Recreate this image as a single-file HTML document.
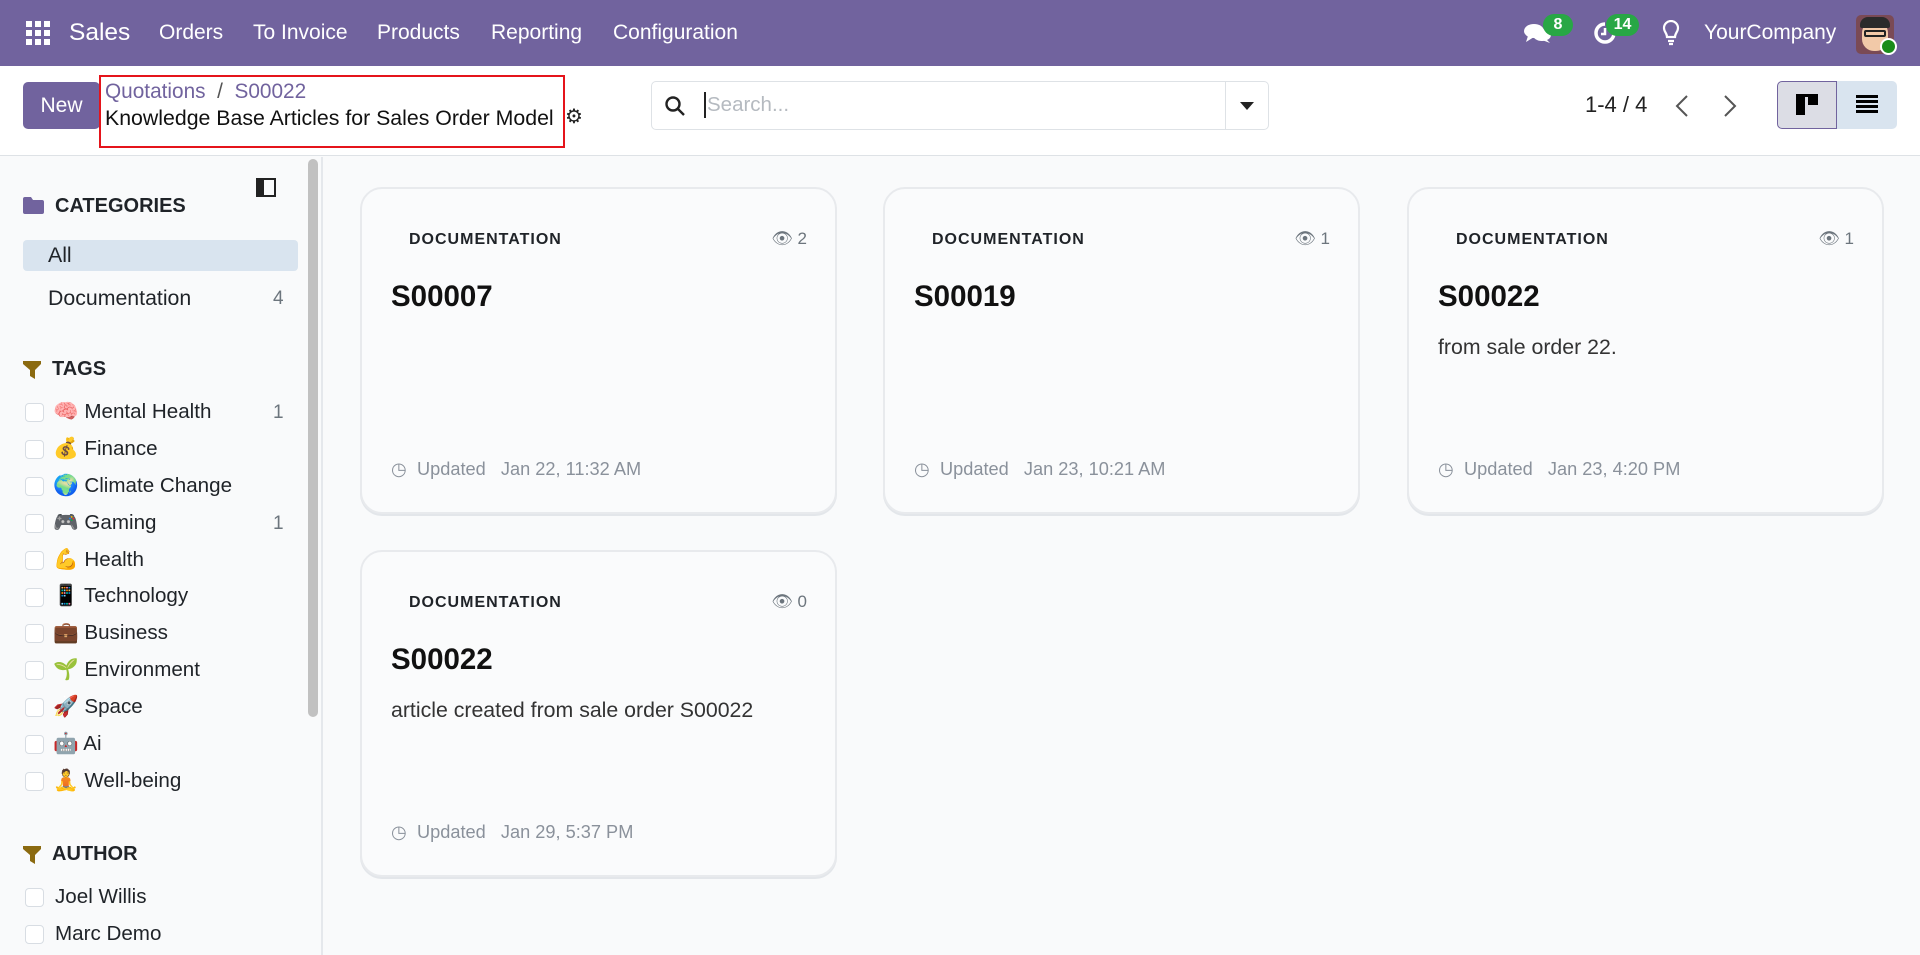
<!DOCTYPE html>
<html><head><meta charset="utf-8"><style>
*{box-sizing:border-box;margin:0;padding:0}
body{width:1920px;height:955px;overflow:hidden;background:#f9fafb;font-family:"Liberation Sans","Noto Sans CJK SC",sans-serif;color:#1f2328;position:relative}
.a{position:absolute;white-space:nowrap}
.nav{position:absolute;left:0;top:0;width:1920px;height:66px;background:#71639e;color:#fff}
.nav .a{font-size:21px;top:21px}
.cp{position:absolute;left:0;top:66px;width:1920px;height:90px;background:#fff;border-bottom:1px solid #dee2e6}
.side{position:absolute;left:0;top:157px;width:323px;height:798px;background:#f9fafb;border-right:2px solid #e5e8ec}
.cb{position:absolute;left:25px;width:19px;height:19px;border:1px solid #d8dde3;border-radius:4px;background:#fff}
.lbl{font-size:21.3px;color:#1f2328}
.tg{font-size:20.6px;color:#1f2328}
.cnt{font-size:19px;color:#6c757d}
.card{position:absolute;width:477px;height:327px;background:#fafbfc;border:2px solid #e8eaed;border-radius:22px;box-shadow:0 2px 0 #e3e6ea}
.card .cat{position:absolute;left:47px;top:42px;font-size:16px;font-weight:bold;letter-spacing:1px;color:#1f2328}
.card .views{position:absolute;right:28px;top:40px;font-size:17px;color:#6c757d}
.card .t{position:absolute;left:29px;top:91px;font-size:29.5px;font-weight:bold;color:#111}
.card .b{position:absolute;left:29px;top:146px;font-size:21.3px;color:#333}
.card .u{position:absolute;left:29px;top:270px;font-size:18.2px;color:#8a919b}
</style></head><body>
<div class="nav">
 <svg class="a" style="left:26px;top:21px" width="24" height="24" viewBox="0 0 24 24" fill="#fff"><rect x="0" y="0" width="6" height="6"/><rect x="9" y="0" width="6" height="6"/><rect x="18" y="0" width="6" height="6"/><rect x="0" y="9" width="6" height="6"/><rect x="9" y="9" width="6" height="6"/><rect x="18" y="9" width="6" height="6"/><rect x="0" y="18" width="6" height="6"/><rect x="9" y="18" width="6" height="6"/><rect x="18" y="18" width="6" height="6"/></svg>
 <div class="a" style="left:69px;top:19px;font-size:24.5px">Sales</div>
 <div class="a" style="left:159px">Orders</div>
 <div class="a" style="left:253px">To Invoice</div>
 <div class="a" style="left:377px">Products</div>
 <div class="a" style="left:491px">Reporting</div>
 <div class="a" style="left:613px">Configuration</div>
 <svg class="a" style="left:1524px;top:22px" width="28" height="22" viewBox="0 0 28 22" fill="#fff"><ellipse cx="10" cy="9" rx="10" ry="7"/><path d="M4 14 L2 20 L10 15Z"/><ellipse cx="18" cy="13" rx="9" ry="6"/><path d="M22 17 L26 21 L18 18Z"/></svg>
 <div class="a" style="left:1543px;top:14px;width:30px;height:22px;border-radius:11px;background:#28a745;font-size:16px;font-weight:bold;text-align:center;line-height:22px">8</div>
 <svg class="a" style="left:1592px;top:20px" width="26" height="26" viewBox="0 0 26 26" fill="none" stroke="#fff" stroke-width="3.5"><path d="M22 13A9 9 0 1 1 13 4"/><path d="M13 8v6h-4" stroke-width="2.5"/></svg>
 <div class="a" style="left:1606px;top:14px;width:33px;height:22px;border-radius:11px;background:#28a745;font-size:16px;font-weight:bold;text-align:center;line-height:22px">14</div>
 <svg class="a" style="left:1662px;top:20px" width="18" height="26" viewBox="0 0 18 26" fill="none" stroke="#fff" stroke-width="2.2"><path d="M5 17C5 13 2 12 2 8A7 7 0 0 1 16 8C16 12 13 13 13 17Z"/><path d="M6 21h6M7 24h4"/></svg>
 <div class="a" style="left:1704px">YourCompany</div>
 <div class="a" style="left:1856px;top:15px;width:38px;height:39px;border-radius:5px;background:#7a4a55;overflow:hidden"><div style="position:absolute;left:6px;top:6px;width:26px;height:30px;border-radius:12px;background:#f2c9a8"></div><div style="position:absolute;left:4px;top:2px;width:30px;height:11px;border-radius:8px 8px 2px 2px;background:#2b2b2b"></div><div style="position:absolute;left:8px;top:15px;width:22px;height:7px;border:2px solid #222;border-radius:2px"></div></div>
 <div class="a" style="left:1880px;top:38px;width:17px;height:17px;border-radius:50%;background:#1a8c1a;border:2px solid #fff"></div>
</div>
<div class="cp">
 <div class="a" style="left:23px;top:16px;width:77px;height:47px;background:#71639e;border-radius:5px;color:#fff;font-size:21px;text-align:center;line-height:47px">New</div>
 <div class="a" style="left:99px;top:9px;width:466px;height:73px;border:2px solid #e5141b"></div>
 <div class="a" style="left:105px;top:14px;font-size:20.8px;color:#71639e">Quotations&nbsp;&nbsp;<span style="color:#555">/</span>&nbsp;&nbsp;S00022</div>
 <div class="a" style="left:105px;top:40px;font-size:21.3px;color:#111">Knowledge Base Articles for Sales Order Model</div>
 <div class="a" style="left:565px;top:38px;font-size:20px;color:#222">⚙</div>
 <div class="a" style="left:651px;top:15px;width:618px;height:49px;border:1px solid #dee2e6;border-radius:5px;background:#fff"></div>
 <svg class="a" style="left:664px;top:29px" width="22" height="22" viewBox="0 0 22 22" fill="none" stroke="#222" stroke-width="2.4"><circle cx="9" cy="9" r="6.5"/><path d="M14 14l6 6"/></svg>
 <div class="a" style="left:704px;top:26px;width:2px;height:26px;background:#222"></div>
 <div class="a" style="left:707px;top:27px;font-size:20.5px;color:#b5bac0">Search...</div>
 <div class="a" style="left:1225px;top:16px;width:1px;height:47px;background:#dee2e6"></div>
 <svg class="a" style="left:1240px;top:36px" width="14" height="8" viewBox="0 0 14 8"><path d="M0 0h14L7 8Z" fill="#222"/></svg>
 <div class="a" style="left:1585px;top:26px;font-size:22px;color:#222">1-4 / 4</div>
 <svg class="a" style="left:1675px;top:28px" width="14" height="24" viewBox="0 0 14 24" fill="none" stroke="#555" stroke-width="2"><path d="M12 2L2 12l10 10"/></svg>
 <svg class="a" style="left:1723px;top:28px" width="14" height="24" viewBox="0 0 14 24" fill="none" stroke="#555" stroke-width="2"><path d="M2 2l10 10L2 22"/></svg>
 <div class="a" style="left:1777px;top:15px;width:60px;height:48px;background:#dcdde5;border:1px solid #71639e;border-radius:5px 0 0 5px"></div>
 <div class="a" style="left:1837px;top:15px;width:60px;height:48px;background:#d9e4ef;border-radius:0 5px 5px 0"></div>
 <svg class="a" style="left:1796px;top:28px" width="22" height="21" viewBox="0 0 22 21" fill="#000"><rect x="0" y="0" width="22" height="3"/><rect x="0" y="0" width="9" height="21"/><rect x="12" y="0" width="10" height="11"/></svg>
 <svg class="a" style="left:1856px;top:29px" width="22" height="18" viewBox="0 0 22 18" fill="#000"><rect y="0" width="22" height="3"/><rect y="5" width="22" height="3"/><rect y="10" width="22" height="3"/><rect y="15" width="22" height="3"/></svg>
</div>
<div class="side">
 <svg class="a" style="left:23px;top:40px" width="21" height="17" viewBox="0 0 21 17"><path d="M0 2Q0 0 2 0h6l2 3h9q2 0 2 2v10q0 2-2 2H2q-2 0-2-2Z" fill="#71639e"/></svg>
 <div class="a" style="left:55px;top:38px;font-size:20px;font-weight:bold">CATEGORIES</div>
 <div class="a" style="left:256px;top:21px;width:20px;height:19px;border:2px solid #222"><div style="width:6px;height:15px;background:#222"></div></div>
 <div class="a" style="left:23px;top:83px;width:275px;height:31px;background:#d9e4ef;border-radius:4px"></div>
 <div class="a lbl" style="left:48px;top:86px">All</div>
 <div class="a lbl" style="left:48px;top:129px">Documentation</div>
 <div class="a cnt" style="left:273px;top:131px">4</div>
 <svg class="a" style="left:23px;top:204px" width="18" height="18" viewBox="0 0 18 18"><path d="M0 0h18v3l-6 6v9l-5-3V9L0 3Z" fill="#8b6a10"/></svg>
 <div class="a" style="left:52px;top:201px;font-size:20px;font-weight:bold">TAGS</div>
 <div class="cb" style="top:246px"></div><div class="a tg" style="left:53px;top:243px">🧠 Mental Health</div><div class="a cnt" style="left:273px;top:245px">1</div>
 <div class="cb" style="top:283px"></div><div class="a tg" style="left:53px;top:280px">💰 Finance</div>
 <div class="cb" style="top:320px"></div><div class="a tg" style="left:53px;top:317px">🌍 Climate Change</div>
 <div class="cb" style="top:357px"></div><div class="a tg" style="left:53px;top:354px">🎮 Gaming</div><div class="a cnt" style="left:273px;top:356px">1</div>
 <div class="cb" style="top:394px"></div><div class="a tg" style="left:53px;top:391px">💪 Health</div>
 <div class="cb" style="top:431px"></div><div class="a tg" style="left:53px;top:427px">📱 Technology</div>
 <div class="cb" style="top:467px"></div><div class="a tg" style="left:53px;top:464px">💼 Business</div>
 <div class="cb" style="top:504px"></div><div class="a tg" style="left:53px;top:501px">🌱 Environment</div>
 <div class="cb" style="top:541px"></div><div class="a tg" style="left:53px;top:538px">🚀 Space</div>
 <div class="cb" style="top:578px"></div><div class="a tg" style="left:53px;top:575px">🤖 Ai</div>
 <div class="cb" style="top:615px"></div><div class="a tg" style="left:53px;top:612px">🧘 Well-being</div>
 <svg class="a" style="left:23px;top:689px" width="18" height="18" viewBox="0 0 18 18"><path d="M0 0h18v3l-6 6v9l-5-3V9L0 3Z" fill="#8b6a10"/></svg>
 <div class="a" style="left:52px;top:686px;font-size:20px;font-weight:bold">AUTHOR</div>
 <div class="cb" style="top:731px"></div><div class="a tg" style="left:55px;top:728px">Joel Willis</div>
 <div class="cb" style="top:768px"></div><div class="a tg" style="left:55px;top:765px">Marc Demo</div>
 <div class="a" style="left:308px;top:2px;width:10px;height:558px;background:#c1c1c1;border-radius:5px"></div>
</div>
<div class="card" style="left:360px;top:187px"><div class="cat">DOCUMENTATION</div><div class="views">👁 2</div><div class="t">S00007</div><div class="u">◷&nbsp; Updated&nbsp;&nbsp; Jan 22, 11:32 AM</div></div>
<div class="card" style="left:883px;top:187px"><div class="cat">DOCUMENTATION</div><div class="views">👁 1</div><div class="t">S00019</div><div class="u">◷&nbsp; Updated&nbsp;&nbsp; Jan 23, 10:21 AM</div></div>
<div class="card" style="left:1407px;top:187px"><div class="cat">DOCUMENTATION</div><div class="views">👁 1</div><div class="t">S00022</div><div class="b">from sale order 22.</div><div class="u">◷&nbsp; Updated&nbsp;&nbsp; Jan 23, 4:20 PM</div></div>
<div class="card" style="left:360px;top:550px"><div class="cat">DOCUMENTATION</div><div class="views">👁 0</div><div class="t">S00022</div><div class="b">article created from sale order S00022</div><div class="u">◷&nbsp; Updated&nbsp;&nbsp; Jan 29, 5:37 PM</div></div>
</body></html>
